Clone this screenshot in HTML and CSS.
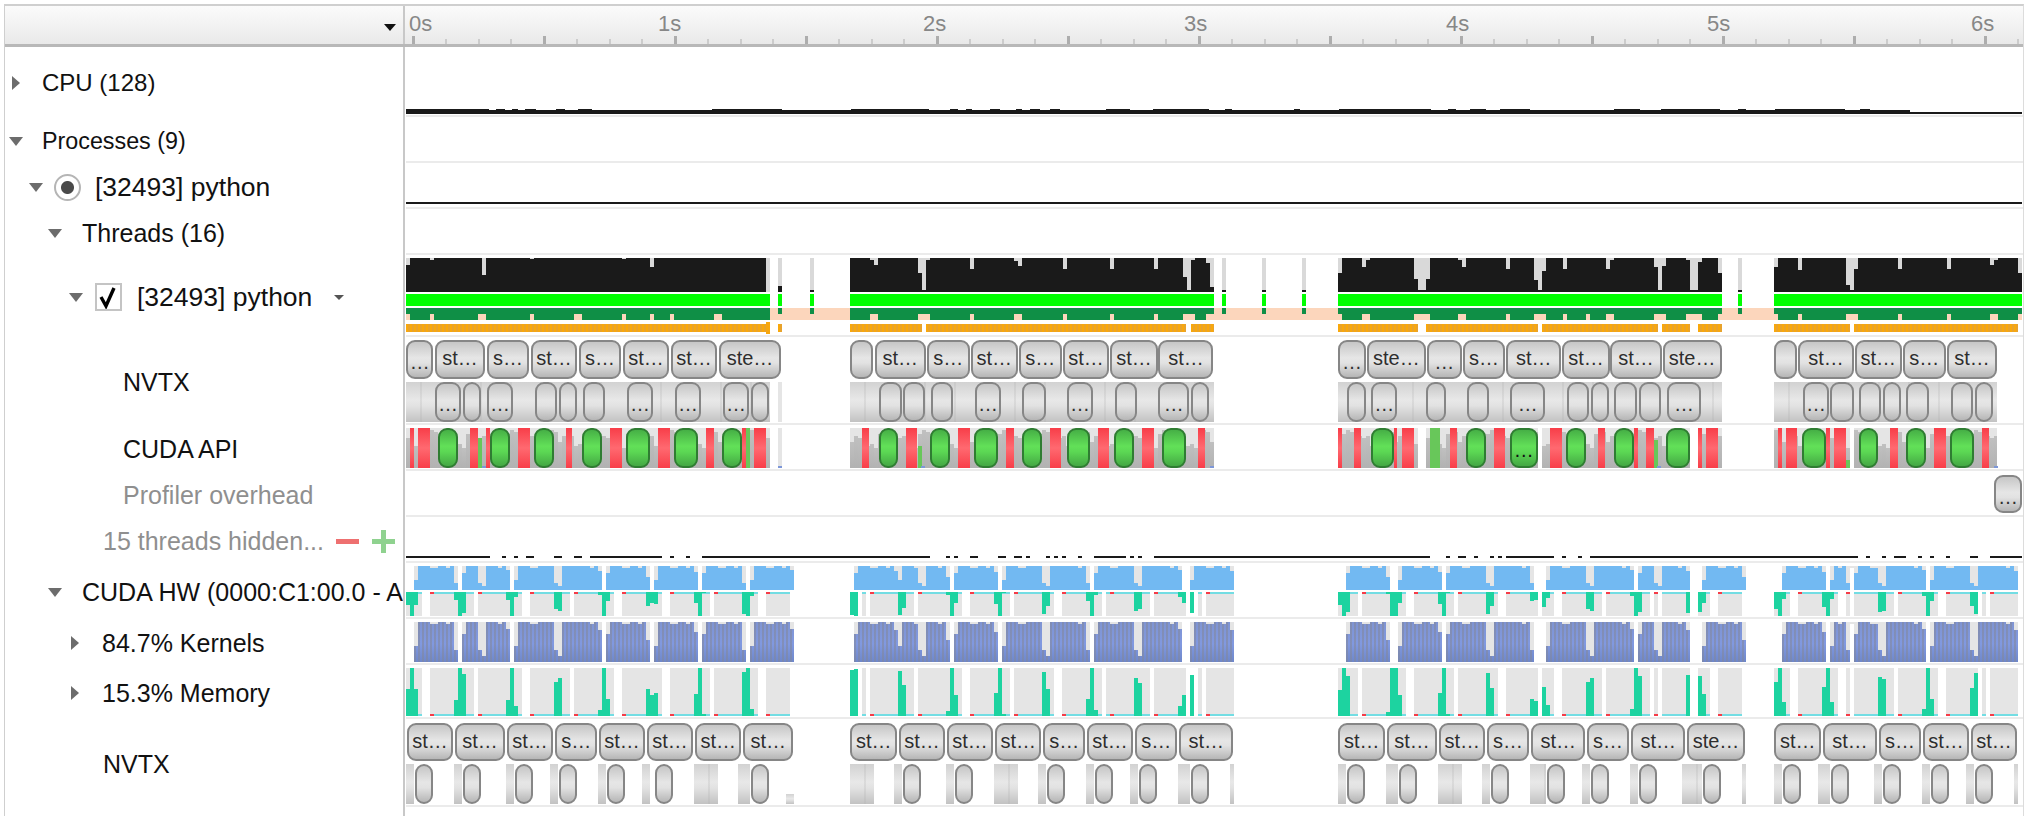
FILE: index.html
```html
<!DOCTYPE html>
<html lang="en">

<head>
    <meta charset="UTF-8">
    <title>Timeline</title>
    <link rel="stylesheet" href="styles.css">
</head>

<body>

    <div class="app">
        <div class="head">
            <div class="head-left"><span class="tri-menu"></span></div>
            <div class="ruler" id="ruler"></div>
        </div>

        <div class="row row-cpu">
            <div class="name in-cpu"><span class="tri right"></span><span class="txt t-top s-cpu">CPU (128)</span></div>
            <div class="track" id="cpu"></div>
        </div>
        <div class="row row-46">
            <div class="name in-top"><span class="tri down"></span><span class="txt t-top s-proc">Processes (9)</span></div>
            <div class="track"></div>
        </div>
        <div class="row row-46">
            <div class="name in-proc"><span class="tri down"></span><span class="radio"></span><span class="txt s-python">[32493] python</span></div>
            <div class="track" id="proc"></div>
        </div>
        <div class="row row-46">
            <div class="name in-group"><span class="tri down"></span><span class="txt t-group">Threads (16)</span></div>
            <div class="track"></div>
        </div>
        <div class="row row-thread">
            <div class="name in-thread">
                <span class="tri down"></span>
                <span class="check"><svg width="22" height="24" viewBox="0 0 22 24"><path d="M4 12 L9 21 L17 3" fill="none" stroke="#000" stroke-width="3.4"/></svg></span>
                <span class="txt s-python">[32493] python</span>
                <span class="tri-small"></span>
            </div>
            <div class="track" id="thread"></div>
        </div>
        <div class="row row-88">
            <div class="name in-sub"><span class="txt">NVTX</span></div>
            <div class="track" id="nvtx1"></div>
        </div>
        <div class="row row-46">
            <div class="name in-sub"><span class="txt">CUDA API</span></div>
            <div class="track" id="api"></div>
        </div>
        <div class="row row-46">
            <div class="name in-sub"><span class="txt muted">Profiler overhead</span></div>
            <div class="track" id="overhead"></div>
        </div>
        <div class="row row-46">
            <div class="name in-hidden">
                <span class="txt muted">15 threads hidden...</span>
                <span class="minus"></span>
                <span class="plus"></span>
            </div>
            <div class="track" id="hidden"></div>
        </div>
        <div class="row row-56">
            <div class="name in-group"><span class="tri down"></span><span class="txt t-group">CUDA HW (0000:C1:00.0 - A100)</span></div>
            <div class="track" id="hw"></div>
        </div>
        <div class="row row-46">
            <div class="name in-hw"><span class="tri right"></span><span class="txt t-hw">84.7% Kernels</span></div>
            <div class="track" id="kernels"></div>
        </div>
        <div class="row row-54">
            <div class="name in-hw"><span class="tri right"></span><span class="txt t-hw">15.3% Memory</span></div>
            <div class="track" id="memory"></div>
        </div>
        <div class="row row-88">
            <div class="name in-nvtx"><span class="txt">NVTX</span></div>
            <div class="track" id="nvtx2"></div>
        </div>
        <div class="row row-end">
            <div class="name"></div>
            <div class="track track-end"></div>
        </div>
    </div>

    <script src="script.js"></script>
</body>

</html>
```

FILE: styles.css
```css
* {
    box-sizing: border-box;
}

html,
body {
    margin: 0;
    height: 816px;
    overflow: hidden;
    background: #fff;
}

.app {
    margin: 4px 0 0 4px;
    width: 2020px;
    border-top: 2px solid #cfcfcf;
    border-left: 1px solid #cfcfcf;
    border-right: 1px solid #dcdcdc;
    font-family: "Liberation Sans", Arial, sans-serif;
    font-size: 25px;
    color: #111;
}

/* header and time axis */
.head {
    display: flex;
    height: 41px;
    border-bottom: 3px solid #b8b8b8;
    background: linear-gradient(#fbfbfb, #e9e9e9);
}

.head-left {
    width: 398px;
    position: relative;
}

.tri-menu {
    position: absolute;
    left: 379px;
    top: 18px;
    border-left: 6px solid transparent;
    border-right: 6px solid transparent;
    border-top: 7px solid #111;
}

.ruler {
    flex: 1;
    position: relative;
    border-left: 2px solid #c8c8c8;
}

.tick {
    position: absolute;
    bottom: 0;
    width: 2px;
    height: 5px;
    background: #cccccc;
}

.tick.major {
    width: 3px;
    height: 8px;
    background: #adadad;
}

.sec {
    position: absolute;
    top: 0;
    font-size: 22px;
    line-height: 36px;
    color: #878787;
}

/* rows */
.row {
    display: flex;
}

.row-cpu { height: 70px; }
.row-46 { height: 46px; }
.row-thread { height: 82px; }
.row-88 { height: 88px; }
.row-56 { height: 56px; }
.row-54 { height: 54px; }
.row-end { height: 9px; }

.name {
    width: 398px;
    padding-top: 2px;
    display: flex;
    align-items: center;
    overflow: hidden;
    white-space: nowrap;
}

.in-cpu { padding-left: 7px; }
.in-top { padding-left: 4px; }
.in-proc { padding-left: 24px; }
.in-group { padding-left: 43px; }
.in-thread { padding-left: 64px; }
.in-sub { padding-left: 118px; }
.in-hidden { padding-left: 98px; }
.in-hw { padding-left: 66px; }
.in-nvtx { padding-left: 98px; }

.t-top { margin-left: 19px; }
.t-group { margin-left: 20px; }
.t-hw { margin-left: 23px; }

.s-cpu { font-size: 24px; }
.s-proc { font-size: 23.3px; }
.s-python { font-size: 26.5px; }

.tri {
    flex: none;
}

.tri.down {
    width: 0;
    border-left: 7.5px solid transparent;
    border-right: 7.5px solid transparent;
    border-top: 9px solid #6c6c6c;
}

.tri.right {
    width: 0;
    border-top: 7.5px solid transparent;
    border-bottom: 7.5px solid transparent;
    border-left: 8px solid #6c6c6c;
}

.in-cpu .t-top { margin-left: 22px; }

.radio {
    flex: none;
    margin: 0 14px 0 11px;
    width: 27px;
    height: 27px;
    border: 2px solid #b5b5b5;
    border-radius: 50%;
    background: radial-gradient(circle, #4a4a4a 0 6px, #fff 7px);
}

.check {
    flex: none;
    margin: 0 15px 0 12px;
    width: 27px;
    height: 28px;
    border: 2px solid #c4c4c4;
    background: #fff;
}

.check svg {
    display: block;
}

.tri-small {
    margin-left: 22px;
    border-left: 5px solid transparent;
    border-right: 5px solid transparent;
    border-top: 5px solid #555;
}

.muted {
    color: #8f8f8f;
}

.minus {
    flex: none;
    margin-left: 12px;
    width: 23px;
    height: 5px;
    background: #ee7070;
}

.plus {
    flex: none;
    position: relative;
    margin-left: 13px;
    width: 23px;
    height: 23px;
    background:
        linear-gradient(#8fd28f, #8fd28f) center / 5px 100% no-repeat,
        linear-gradient(#8fd28f, #8fd28f) center / 100% 5px no-repeat;
}

/* tracks */
.track {
    flex: 1;
    position: relative;
    margin-left: 3px;
    width: 1616px;
    border-bottom: 2px solid #ebebeb;
    border-left: 0;
}

.name + .track::before {
    content: "";
    position: absolute;
    left: -3px;
    top: 0;
    bottom: -2px;
    width: 2px;
    background: #c8c8c8;
}

.track-end {
    border-bottom: 0;
}

.b {
    position: absolute;
}

.black { background: #1a1a1a; }
.grey { background: #d9d9d9; }
.lime { background: #00ff00; }
.dark { background: #0f8f46; }
.peach { background: #fcd6bc; }
.solid-orange { background: #f7a70f; }

.orange {
    background: repeating-linear-gradient(90deg, #f9a80c 0 2px, #e8a32c 2px 4px);
}

.lane {
    background:
        repeating-linear-gradient(90deg, transparent 0 14px, rgba(170, 170, 170, 0.22) 14px 16px, transparent 16px 30px),
        linear-gradient(#d2d2d2, #e8e8e8 45%, #e2e2e2 60%, #c2c2c2);
}

.pale { background: #e5e5e5; }

.bar {
    background: linear-gradient(#c0c0c0, #b2b2b2);
}

.red {
    background: linear-gradient(#f83e49, #ff6970 50%, #f83e49);
}

.thin-green { background: #68c75a; }
.tail { background: #7d97d8; }

.slice {
    border: 2px solid #868686;
    border-radius: 9px;
    background: linear-gradient(#c6c6c6, #e6e6e6 45%, #e2e2e2 60%, #b6b6b6);
    color: #2e2e2e;
    font-size: 20px;
    line-height: 32px;
    text-align: center;
    overflow: hidden;
    white-space: nowrap;
}

.slice.ok {
    border-color: #2f7d32;
    background: linear-gradient(#46b046, #62e058 45%, #5cd854 60%, #44a844);
    color: #111;
    line-height: 40px;
}

.slice.low {
    line-height: 40px;
}

.hw-blue { background: #72b9f2; }
.hw-kernel {
    background:
        repeating-linear-gradient(90deg, rgba(130, 135, 155, 0.55) 0 2px, transparent 2px 4px),
        linear-gradient(#7f94d2, #8199e0 55%, #6e87ca);
}

.teal { background: #1dd3a0; }
.cyan { background: #73dde3; }
.flag { background: #f53b47; }
```

FILE: script.js
```js
// page coordinates: helpers convert from measured units
const third = (o, z) => o + z / 3;
const wide = (o, z) => o + z / 2.24;

function box(id, cls, x0, x1, y0, y1, text) {
    let track = document.getElementById(id);
    let r = track.getBoundingClientRect();
    let el = document.createElement('div');
    el.className = 'b ' + cls;
    el.style.left = (x0 - r.left) + 'px';
    el.style.width = (x1 - x0) + 'px';
    el.style.top = (y0 - r.top) + 'px';
    el.style.height = (y1 - y0) + 'px';
    if (text) el.textContent = text;
    track.appendChild(el);
    return el;
}

// time axis
let ruler = document.getElementById('ruler');
let rulerLeft = ruler.getBoundingClientRect().left;
for (let i = 0; i * 32.75 + 410 < 2022; i++) {
    let tick = document.createElement('div');
    tick.className = i % 4 == 0 ? 'tick major' : 'tick';
    tick.style.left = (410 + i * 32.75 - rulerLeft) + 'px';
    ruler.appendChild(tick);
}
const secX = [407, 656, 921, 1182, 1444, 1705, 1969];
secX.forEach(function (x, s) {
    let sec = document.createElement('div');
    sec.className = 'sec';
    sec.textContent = s + 's';
    sec.style.left = (x - rulerLeft) + 'px';
    ruler.appendChild(sec);
});

// cpu summary
box('cpu', 'black', 406, 1910, 110, 114);
box('cpu', 'black', 1910, 2022, 112, 114);
let thick = [[406, 489], [496, 505], [512, 518], [525, 536], [556, 565], [578, 592], [712, 782],
    [851, 929], [950, 958], [966, 972], [990, 1000], [1016, 1022], [1030, 1040], [1050, 1060],
    [1106, 1130], [1153, 1209], [1225, 1232], [1294, 1300], [1339, 1431], [1448, 1456], [1470, 1486],
    [1500, 1530], [1614, 1640], [1661, 1720], [1738, 1746], [1775, 1845], [1860, 1870]];
for (let t of thick) box('cpu', 'black', t[0], t[1], 108.5, 110);
box('proc', 'black', 406, 2022, 202, 204);

// thread state lanes
let bursts = [
    { o: 404, f: third, x0: 6, x1: 1098, notch: [[6, 18, 74], [78, 90, 60], [222, 234, 48], [234, 246, 104], [378, 390, 56], [510, 522, 54], [522, 534, 28], [654, 666, 56], [738, 750, 80], [798, 810, 54], [930, 942, 36], [942, 954, 44]] },
    { o: 700, f: wide, x0: 336, x1: 1151, notch: [[381, 390, 60], [390, 399, 74], [488, 497, 100], [497, 506, 150], [506, 515, 60], [605, 614, 86], [703, 712, 62], [712, 721, 78], [812, 821, 86], [918, 927, 86], [1018, 1027, 86], [1081, 1090, 110], [1090, 1099, 150], [1099, 1108, 60], [1134, 1143, 70], [1143, 1151, 140]] },
    { o: 1326, f: wide, x0: 27, x1: 887, notch: [[27, 36, 98], [81, 90, 80], [90, 99, 60], [198, 207, 116], [207, 225, 150], [225, 234, 116], [296, 305, 60], [305, 314, 80], [404, 413, 86], [466, 475, 120], [475, 484, 150], [484, 493, 92], [530, 539, 86], [628, 637, 86], [637, 646, 60], [735, 744, 80], [744, 753, 150], [753, 762, 78], [806, 815, 60], [815, 833, 150], [833, 842, 66], [878, 887, 98]] },
    { o: 1326, f: wide, x0: 1004, x1: 1559, notch: [[1004, 1013, 80], [1058, 1067, 90], [1165, 1174, 136], [1174, 1183, 150], [1183, 1192, 88], [1282, 1291, 86], [1390, 1399, 86], [1487, 1496, 74], [1496, 1505, 60], [1550, 1559, 98]] }
];

box('thread', 'peach', 770, 850, 308, 320);
box('thread', 'peach', 1214, 1338, 308, 320);
box('thread', 'peach', 1722, 1774, 308, 320);

for (let b of bursts) {
    let x0 = b.f(b.o, b.x0), x1 = b.f(b.o, b.x1);
    box('thread', 'black', x0, x1, 258, 292);
    box('thread', 'lime', x0, x1, 294, 306);
    box('thread', 'dark', x0, x1, 308, 320);
    for (let n of b.notch) {
        let nx0 = b.f(b.o, n[0]), nx1 = b.f(b.o, n[1]);
        box('thread', 'grey', nx0, nx1, 258, 240 + n[2] / 3);
        box('thread', 'peach', nx0, nx1, 314, 320);
    }
}
box('thread', 'grey', 766, 770, 258, 292);
box('thread', 'peach', wide(1326, 583), wide(1326, 591), 314, 320);

// short blips between the long bursts
for (let x of [778, 810, 1222, 1262, 1302, 1738]) {
    box('thread', 'grey', x, x + 4, 258, 290);
    box('thread', 'black', x, x + 4, x == 778 ? 286 : 290, 292);
    box('thread', 'lime', x, x + 4, 294, 306);
    box('thread', 'dark', x, x + 4, 308, 314);
}

let orange = [[406, 766], [778, 782], [850, 922], [926, 1186], [1191, 1214], [1338, 1418], [1426, 1538],
    [1542, 1658], [1662, 1690], [1698, 1722], [1774, 1850], [1854, 2018]];
for (let o of orange) box('thread', 'orange', o[0], o[1], 324, 332);
box('thread', 'solid-orange', 766, 770, 322, 334);

// nvtx lane of the main thread
const burstBg = [[406, 770], [850, 1214], [1338, 1722], [1774, 1997]];
for (let s of burstBg) box('nvtx1', 'lane', s[0], s[1], 382, 422);
box('nvtx1', 'pale', 778, 782, 382, 422);

function slices(id, f, o, list, y0, y1, cls) {
    for (let s of list) {
        let label = s[2] || '';
        let c = 'slice ' + (cls || '') + (label == '…' ? ' low' : '');
        box(id, c, f(o, s[0]), f(o, s[1]), y0, y1, label);
    }
}

slices('nvtx1', third, 404, [[6, 88, '…'], [92, 244, 'st…'], [248, 376, 's…'], [380, 520, 'st…'], [524, 652, 's…'], [656, 796, 'st…'], [800, 940, 'st…'], [944, 1132, 'ste…']], 340, 379);
slices('nvtx1', wide, 700, [[336, 388], [391, 506, 'st…'], [508, 604, 's…'], [606, 712, 'st…'], [714, 810, 's…'], [812, 917, 'st…'], [919, 1025, 'st…'], [1027, 1150, 'st…']], 340, 379);
slices('nvtx1', wide, 1326, [[27, 89, '…'], [91, 224, 'ste…'], [226, 304, '…'], [306, 402, 's…'], [404, 527, 'st…'], [529, 636, 'st…'], [637, 752, 'st…'], [754, 886, 'ste…'], [1004, 1056], [1058, 1182, 'st…'], [1184, 1290, 'st…'], [1292, 1388, 's…'], [1390, 1504, 'st…']], 340, 379);

slices('nvtx1', third, 404, [[92, 172, '…'], [176, 232], [248, 328, '…'], [392, 460], [464, 520], [536, 604], [668, 748, '…'], [812, 892, '…'], [956, 1036, '…'], [1040, 1096]], 382, 422);
slices('nvtx1', wide, 700, [[400, 452], [455, 505], [517, 567], [615, 675, '…'], [722, 774], [821, 881, '…'], [929, 979], [1027, 1096, '…'], [1100, 1141]], 382, 422);
slices('nvtx1', wide, 1326, [[47, 89], [101, 160, '…'], [225, 268], [315, 365], [413, 491, '…'], [539, 590], [594, 635], [646, 697], [701, 751], [763, 841, '…'], [1068, 1127, '…'], [1130, 1182], [1193, 1243], [1248, 1288], [1300, 1351], [1399, 1449], [1453, 1495]], 382, 422);

// cuda api lane
const apiSpans = [[406, 770], [778, 782], [850, 1214], [1338, 1418], [1426, 1538], [1542, 1690], [1698, 1722], [1774, 1850], [1854, 1997]];
const barH = [0.65, 0.85, 0.55, 0.8, 0.95, 0.6, 0.75, 0.9, 0.5, 0.8];
for (let s of apiSpans) {
    box('api', 'pale', s[0], s[1], 428, 468);
    if (s[1] - s[0] < 10) continue;
    let n = 0;
    for (let x = s[0]; x < s[1]; x += 4, n++) {
        let h = 40 * barH[(n * 3 + Math.floor(s[0])) % barH.length];
        box('api', 'bar', x, Math.min(x + 4, s[1]), 468 - h, 468);
    }
}

function reds(f, o, list) {
    for (let r of list) box('api', 'red', f(o, r[0]), f(o, r[1]), 428, 468);
}
reds(third, 404, [[18, 30], [42, 78], [198, 222], [246, 258], [342, 378], [486, 504], [618, 654], [762, 798], [906, 930], [1014, 1026], [1050, 1086]]);
reds(wide, 700, [[363, 378], [461, 486], [578, 605], [685, 703], [784, 808], [892, 916], [990, 1016], [1116, 1132]]);
reds(wide, 1326, [[27, 36], [63, 78], [152, 160], [170, 197], [278, 293], [376, 402], [502, 528], [610, 626], [690, 700], [717, 734], [833, 842], [852, 877], [1012, 1021], [1030, 1056], [1120, 1130], [1138, 1164], [1263, 1281], [1362, 1388], [1470, 1486]]);

box('api', 'thin-green', third(404, 222), third(404, 234), 438, 468);
box('api', 'thin-green', third(404, 1026), third(404, 1038), 428, 468);
box('api', 'thin-green', wide(700, 488), wide(700, 497), 446, 468);
box('api', 'thin-green', wide(1326, 233), wide(1326, 256), 428, 468);
box('api', 'thin-green', wide(1326, 735), wide(1326, 744), 440, 468);
box('api', 'thin-green', wide(1326, 1165), wide(1326, 1174), 460, 468);
for (let x of [482, 778, 921, 1210, 1657, 1994]) box('api', 'tail', x, x + 4, 466, 468);

slices('api', third, 404, [[102, 162], [258, 318], [390, 450], [534, 594], [666, 738], [810, 882], [954, 1014]], 428, 468, 'ok');
slices('api', wide, 700, [[400, 443], [516, 560], [614, 667], [722, 766], [821, 874], [928, 972], [1035, 1089]], 428, 468, 'ok');
slices('api', wide, 1326, [[100, 152], [314, 358], [412, 474, '…'], [538, 582], [645, 690], [762, 815], [1067, 1119], [1193, 1236], [1300, 1344], [1398, 1452]], 428, 468, 'ok');

box('overhead', 'slice low', 1994, 2022, 475, 513, '…');

// collapsed threads
const dashes = [
    [400, [[18, 270], [306, 318], [342, 354], [378, 402], [462, 486], [522, 546], [570, 786], [810, 822], [858, 870], [906, 1500]]],
    [840, [[0, 270], [318, 330], [342, 354], [390, 414], [474, 498], [522, 546], [558, 570], [618, 630], [642, 654], [666, 678], [714, 726], [762, 858], [870, 882], [894, 906], [942, 1500]]],
    [1330, [[0, 300], [348, 360], [384, 408], [432, 444], [480, 492], [504, 516], [528, 672], [696, 708], [744, 756], [780, 1500]]],
    [1700, [[0, 474], [498, 510], [546, 558], [582, 618], [654, 666], [690, 702], [738, 750], [810, 834], [870, 966]]]
];
for (let d of dashes) {
    for (let p of d[1]) box('hidden', 'black', third(d[0], p[0]), third(d[0], p[1]), 556, 558);
}

// gpu spans: start, end and where the dip of a double span sits
const spanSets = [
    [400, [[42, 174], [186, 330, 234], [342, 606, 462], [618, 750], [762, 894], [906, 1038], [1050, 1182]]],
    [840, [[42, 174], [174, 330, 234], [342, 474], [486, 750, 606], [762, 1026, 882], [1050, 1182]]],
    [1330, [[48, 180], [204, 336], [348, 612, 468], [648, 912, 768], [924, 1080, 972], [1116, 1248], [1356, 1488]]],
    [1700, [[390, 450], [462, 678, 534], [690, 954, 810]]]
];
const endDepth = [0.7, 0.17, 0.2, 0.45, 0.25];

function hwLane(id, cls, y0, y1) {
    let h = y1 - y0, i = 0;
    for (let set of spanSets) {
        for (let s of set[1]) {
            let x0 = third(set[0], s[0]), x1 = third(set[0], s[1]);
            box(id, cls, x0, x1, y0, y1);
            box(id, 'pale', x0, x0 + 4, y0, y0 + h * (i % 2 ? 0.3 : 0.6));
            box(id, 'pale', x0 + 16, x0 + 24, y0, y0 + 1.5);
            box(id, 'pale', x1 - 12, x1 - 8, y0, y0 + 1.5);
            box(id, 'pale', x1 - 4, x1, y0, y0 + h * endDepth[i % endDepth.length]);
            if (s[2]) {
                let n = third(set[0], s[2]);
                box(id, 'pale', n, n + 4, y0, y0 + h * 0.7);
                box(id, 'pale', n + 4, n + 8, y0, y0 + h * 0.85);
            }
            i++;
        }
    }
}
hwLane('hw', 'hw-blue', 566, 590);
hwLane('kernels', 'hw-kernel', 622, 662);

// teal spikes shared by the copy and memory lanes
const memSpans = [
    [400, [[18, 66], [90, 222, 1], [234, 366, 1], [390, 510, 1], [522, 642, 1], [666, 786, 1], [810, 930, 1], [942, 1074, 1], [1098, 1170, 1]]],
    [840, [[66, 78], [90, 222, 1], [234, 366, 1], [390, 510, 1], [522, 642, 1], [666, 786, 1], [798, 930, 2], [942, 1038, 1], [1074, 1086], [1098, 1182, 1]]],
    [1330, [[24, 84], [96, 228, 1], [252, 372, 1], [384, 504, 1], [528, 624, 1], [636, 672], [696, 816, 1], [828, 960, 1], [972, 984, 1], [996, 1080], [1104, 1140], [1164, 1236, 1], [1404, 1524, 1]]],
    [1700, [[222, 270], [438, 450, 1], [462, 582], [594, 714, 1], [738, 834, 1], [846, 858], [870, 954, 1]]]
];
const spikes = [
    [400, [[18, 30, 448], [30, 42, 384], [42, 54, 448], [162, 174, 480], [174, 186, 384], [186, 198, 402], [318, 330, 480], [330, 342, 384], [342, 354, 498], [462, 474, 426], [474, 486, 414], [594, 606, 510], [606, 618, 384], [618, 630, 477], [738, 750, 447], [750, 762, 465], [762, 774, 459], [882, 894, 462], [894, 906, 384], [906, 918, 522], [1026, 1038, 396], [1038, 1050, 384], [1050, 1062, 507]]],
    [840, [[30, 42, 390], [42, 54, 387], [174, 186, 393], [186, 198, 435], [318, 330, 513], [330, 342, 384], [342, 354, 465], [462, 474, 459], [474, 486, 384], [486, 498, 522], [606, 618, 396], [618, 630, 447], [738, 750, 477], [750, 762, 384], [762, 774, 510], [882, 894, 414], [894, 906, 429], [1014, 1026, 498], [1026, 1038, 465], [1050, 1062, 405]]],
    [1330, [[24, 36, 450], [36, 48, 384], [48, 60, 408], [168, 180, 516], [180, 204, 384], [204, 216, 465], [324, 336, 459], [336, 348, 384], [348, 360, 522], [468, 480, 399], [480, 492, 444], [600, 612, 477], [612, 624, 483], [636, 648, 441], [648, 660, 495], [768, 780, 426], [780, 792, 414], [900, 912, 507], [912, 924, 384], [924, 936, 408], [1068, 1080, 405], [1104, 1116, 408], [1116, 1128, 462]]],
    [1700, [[222, 234, 426], [234, 246, 384], [246, 258, 486], [366, 378, 441], [378, 390, 384], [390, 402, 486], [534, 546, 411], [546, 558, 417], [666, 678, 507], [678, 690, 384], [690, 702, 477], [810, 822, 444], [822, 834, 399]]]
];

for (let set of memSpans) {
    for (let s of set[1]) {
        let x0 = third(set[0], s[0]), x1 = third(set[0], s[1]);
        box('hw', 'pale', x0, x1, 592, 616);
        box('memory', 'pale', x0, x1, 668, 716);
        box('hw', 'cyan', x0, x1, 592, 594);
        box('memory', 'cyan', x0, x1, 714, 716);
        if (s[2]) {
            let fx = x0 + (s[2] - 1) * 4;
            box('hw', 'flag', fx, fx + 4, 592, 594);
            box('memory', 'flag', fx, fx + 4, 714, 716);
        }
    }
}
for (let set of spikes) {
    for (let p of set[1]) {
        let x0 = third(set[0], p[0]), x1 = third(set[0], p[1]);
        let f = (528 - p[2]) / 144;
        box('hw', 'teal', x0, x1, 592, 592 + 24 * f);
        box('memory', 'teal', x0, x1, 716 - 48 * f, 716);
    }
}

// nvtx lane of the gpu
const gpuTop = [
    [400, [[20, 160, 'st…'], [164, 316, 'st…'], [320, 460, 'st…'], [466, 592, 's…'], [596, 736, 'st…'], [740, 880, 'st…'], [886, 1024, 'st…'], [1030, 1180, 'st…']]],
    [840, [[30, 172, 'st…'], [176, 316, 'st…'], [320, 460, 'st…'], [466, 604, 'st…'], [610, 736, 's…'], [740, 880, 'st…'], [886, 1012, 's…'], [1018, 1180, 'st…']]],
    [1330, [[24, 166, 'st…'], [170, 322, 'st…'], [328, 466, 'st…'], [470, 598, 's…'], [604, 766, 'st…'], [770, 898, 's…'], [904, 1066, 'st…'], [1070, 1246, 'ste…']]],
    [1700, [[222, 364, 'st…'], [368, 532, 'st…'], [536, 664, 's…'], [668, 808, 'st…'], [812, 952, 'st…']]]
];
const gpuBg = [
    [400, [[18, 42], [162, 186], [318, 342], [450, 474], [594, 618], [726, 750], [882, 954], [1014, 1050]]],
    [840, [[30, 102], [162, 186], [318, 342], [462, 534], [594, 618], [738, 762], [870, 894], [1014, 1050], [1170, 1182]]],
    [1330, [[24, 48], [168, 204], [324, 396], [456, 480], [600, 648], [756, 780], [900, 924], [1056, 1116], [1236, 1248]]],
    [1700, [[222, 246], [354, 390], [522, 546], [666, 690], [798, 822], [942, 954]]]
];
const gpuLow = [
    [400, [[44, 100], [188, 244], [344, 400], [476, 532], [620, 676], [764, 820], [1052, 1108]]],
    [840, [[188, 244], [344, 400], [620, 676], [764, 820], [896, 952], [1052, 1108]]],
    [1330, [[50, 106], [206, 262], [482, 538], [650, 706], [782, 838], [926, 982], [1118, 1174]]],
    [1700, [[248, 304], [392, 448], [548, 604], [692, 748], [824, 880]]]
];
box('nvtx2', 'lane', third(400, 1158), third(400, 1182), 794, 804);

for (let set of gpuTop) slices('nvtx2', third, set[0], set[1], 723, 761);
for (let set of gpuBg) {
    for (let s of set[1]) box('nvtx2', 'lane', third(set[0], s[0]), third(set[0], s[1]), 764, 804);
}
for (let set of gpuLow) slices('nvtx2', third, set[0], set[1], 764, 804);
```
